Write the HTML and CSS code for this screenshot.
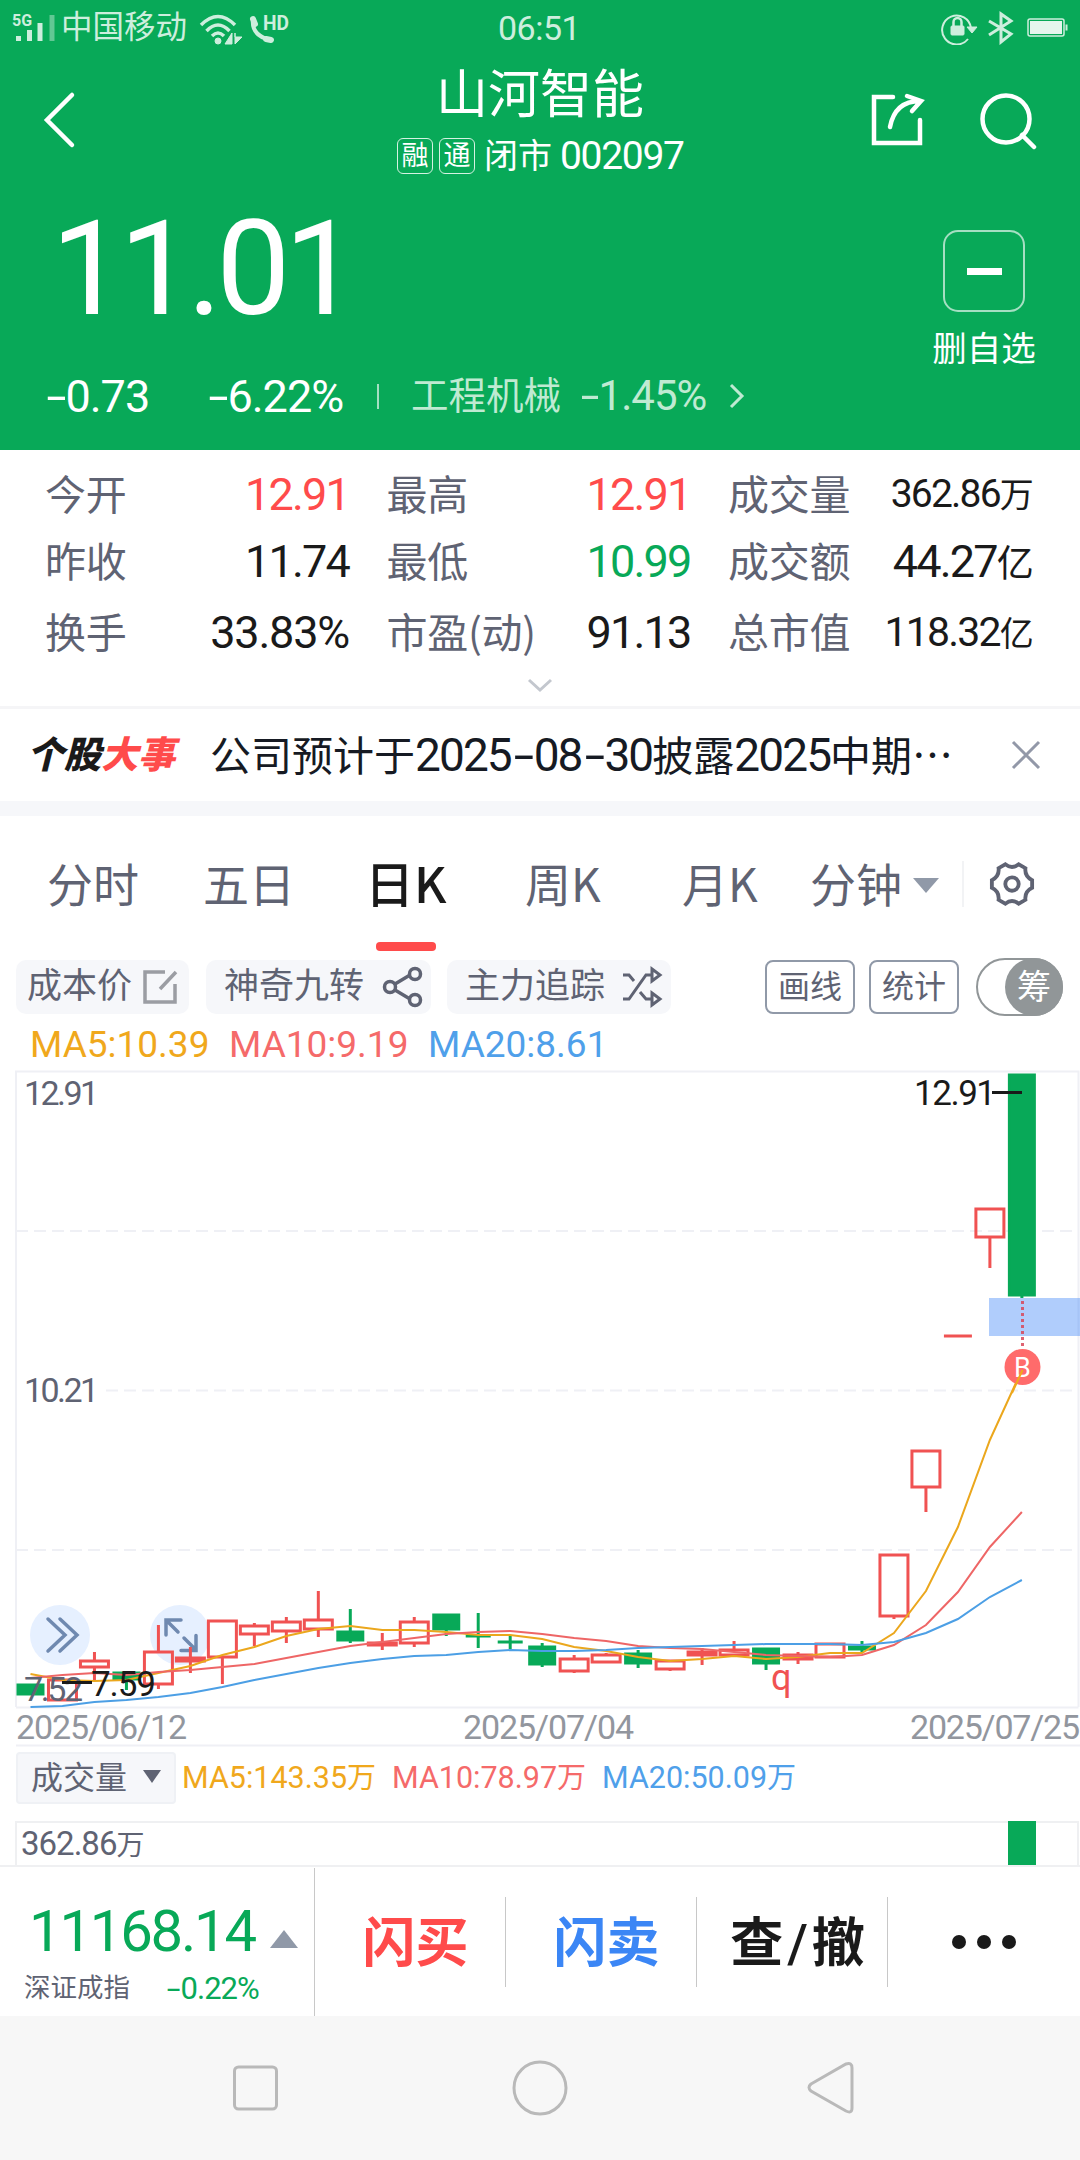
FILE: index.html
```html
<!DOCTYPE html>
<html lang="zh-CN">
<head>
    <meta charset="UTF-8">
    <meta name="viewport" content="width=device-width, initial-scale=1.0">
    <title>山河智能 002097</title>
    <link rel="stylesheet" href="styles.css">
</head>
<body>
    <div class="top">
        <div class="status">
            <svg class="signal" width="46" height="36" viewBox="0 0 46 36">
                <text x="0" y="16" font-size="16" font-weight="700">5G</text>
                <path d="M6.500 26v5M17.500 20v11M28 13v18" stroke-width="5"/>
                <path d="M40 5v26" stroke-width="5" opacity=".45"/>
            </svg>
            <span class="carrier">中国移动</span>
            <svg class="wifi" width="44" height="34" viewBox="0 0 44 34">
                <path d="M2 14q17-17 34 0M7.500 20q11.500-12 23 0M13 25q6-6 12 0" stroke-width="3.500" fill="none"/>
                <circle cx="19" cy="30" r="3"/>
                <path d="M33 22v11h-7zM36 33V22v4h7z" stroke-width="1"/>
            </svg>
            <svg class="call" width="42" height="34" viewBox="0 0 42 34">
                <path d="M4 8q-2 17 18 21" stroke-width="4" fill="none"/>
                <path d="M4 8l2 5M17 28l5 1" stroke-width="6" stroke-linecap="round"/>
                <text x="14" y="19" font-size="21" font-weight="700" textLength="26" lengthAdjust="spacingAndGlyphs">HD</text>
            </svg>
            <span class="clock">06:51</span>
            <svg class="lock" width="38" height="34" viewBox="0 0 38 34">
                <path d="M28 28A14.500 14.500 0 1 1 31 17" stroke-width="2" fill="none"/>
                <path d="M27 16h10l-5 6z" stroke-width="1"/>
                <rect x="11" y="15" width="13" height="9" rx="1" stroke-width="1"/>
                <path d="M13.500 15v-4a4 4 0 0 1 8 0v4" stroke-width="2.500" fill="none"/>
            </svg>
            <svg class="bluetooth" width="26" height="34" viewBox="0 0 26 34">
                <path d="M1 10l22 13-10 8V3l10 7L1 24" stroke-width="3" fill="none"/>
            </svg>
            <svg class="battery" width="41" height="20" viewBox="0 0 41 20">
                <rect x="1" y="1" width="36" height="17" rx="2" fill="none" stroke-width="1.500"/>
                <rect x="3" y="3" width="32" height="13" fill="#e6f6ee" stroke="none"/>
                <rect x="39" y="7" width="1" height="5"/>
            </svg>
        </div>

        <div class="header">
            <svg class="back" width="34" height="60" viewBox="0 0 34 60">
                <path d="M30 5L5 30l25 25"/>
            </svg>
            <div class="name">
                <h1>山河智能</h1>
                <div class="code">
                    <span class="badge">融</span><span class="badge">通</span>
                    <span class="market">闭市</span><span class="num">002097</span>
                </div>
            </div>
            <svg class="share" width="56" height="56" viewBox="0 0 56 56">
                <path d="M23 5H4v46H50V28M20 35Q25 9 50 9M37 4l14 5-9 10"/>
            </svg>
            <svg class="search" width="58" height="58" viewBox="0 0 58 58">
                <circle cx="27" cy="27" r="23.500"/><path d="M43 43l12 12"/>
            </svg>
        </div>

        <div class="quote">
            <div class="price">11.01</div>
            <div class="remove">
                <div class="remove-box"><i></i></div>
                <span>删自选</span>
            </div>
        </div>

        <div class="change">
            <span class="diff"><i class="dash">-</i>0.73</span>
            <span class="rate"><i class="dash">-</i>6.22%</span>
            <i class="bar"></i>
            <span class="sector">工程机械</span>
            <span class="sector-rate"><i class="dash">-</i>1.45%</span>
            <svg width="18" height="28" viewBox="0 0 18 28"><path d="M3 3l11 11L3 25"/></svg>
        </div>
    </div>

    <div class="stats">
        <div class="cell"><label>今开</label><b class="red">12.91</b></div>
        <div class="cell"><label>最高</label><b class="red">12.91</b></div>
        <div class="cell"><label>成交量</label><b class="small">362.86<em>万</em></b></div>
        <div class="cell"><label>昨收</label><b>11.74</b></div>
        <div class="cell"><label>最低</label><b class="green">10.99</b></div>
        <div class="cell"><label>成交额</label><b>44.27<em>亿</em></b></div>
        <div class="cell"><label>换手</label><b class="wide">33.83%</b></div>
        <div class="cell"><label>市盈(动)</label><b>91.13</b></div>
        <div class="cell"><label>总市值</label><b class="small cap">118.32<em>亿</em></b></div>
    </div>
    <div class="more">
        <svg width="28" height="16" viewBox="0 0 28 16"><path d="M3 3l11 10L25 3"/></svg>
    </div>

    <div class="news">
        <div class="news-logo">个股<span>大事</span></div>
        <div class="news-text">公司预计于<span class="n">2025<i class="dash">-</i>08<i class="dash">-</i>30</span>披露<span class="n">2025</span>中期⋯</div>
        <svg width="32" height="32" viewBox="0 0 32 32"><path d="M3 3l26 26M29 3L3 29"/></svg>
    </div>

    <div class="tabs">
        <span class="tab">分时</span>
        <span class="tab">五日</span>
        <span class="tab active">日K</span>
        <span class="tab">周K</span>
        <span class="tab">月K</span>
        <span class="tab minute">分钟<i></i></span>
        <span class="gear">
            <svg width="46" height="46" viewBox="0 0 48 48">
                <path d="M17 3.500Q24 9 31 3.500L38 7.500Q37 16 45 20V28Q37 32 38 40.500L31 44.500Q24 39 17 44.500L10 40.500Q11 32 3 28V20Q11 16 10 7.500Z"/>
                <circle cx="24" cy="24" r="7"/>
            </svg>
        </span>
    </div>

    <div class="tools">
        <span class="chip cost">成本价
            <svg width="36" height="36" viewBox="0 0 36 36"><path d="M23 3H3v30h30V15M18 20L34 3" stroke="#9b9da3"/></svg>
        </span>
        <span class="chip nine">神奇九转
            <svg width="42" height="42" viewBox="0 0 42 42"><path d="M13 18L28 9M13 24l15 9"/><circle cx="8" cy="21" r="5.500"/><circle cx="33" cy="8" r="5.500"/><circle cx="33" cy="34" r="5.500"/></svg>
        </span>
        <span class="chip force">主力追踪
            <svg class="shuffle" width="42" height="42" viewBox="0 0 42 42"><path d="M1 9h6l5 6M1 33h6L24 9h6M18 26l6 7h6M30 3l8 6-8 6zM30 27l8 6-8 6z"/></svg>
        </span>
        <span class="outline draw">画线</span>
        <span class="outline">统计</span>
        <span class="toggle"><i>筹</i></span>
    </div>

    <div class="ma">
        <span class="yellow">MA5:10.39</span>
        <span class="pink">MA10:9.19</span>
        <span class="blue">MA20:8.61</span>
    </div>

    <svg class="chart" width="1080" height="682" viewBox="0 1066 1080 682">
        <g class="grid">
            <path d="M16 1707V1071.500H1078.500V1707M16 1707.500H1078.500" stroke-width="2"/>
            <path d="M16 1231H1078M106 1390.500H1078M16 1550H1078" stroke-width="2" stroke-dasharray="12 6"/>
            <path d="M16 1745.500H1080"/>
        </g>
        <g class="btn">
            <circle cx="60" cy="1635" r="30"/>
            <circle cx="180" cy="1635" r="30"/>
            <path d="M48 1619l17 16-17 16M60 1619l17 16-17 16"/>
            <path d="M166 1635v-15h15M166 1620l12 12M184 1638l12 12M181 1650.500h15v-15"/>
        </g>
        <g id="candles"></g>
        <path class="line-yellow" id="ma5"/>
        <path class="line-red" id="ma10"/>
        <path class="line-blue" id="ma20"/>

        <rect x="989" y="1298" width="91" height="38" fill="#2f7cf6" fill-opacity=".38"/>
        <path d="M1022.500 1301V1349" stroke="#d9485a" stroke-width="3" stroke-dasharray="3 3" opacity=".85"/>
        <circle cx="1022.500" cy="1367" r="18" fill="#ff6b6b"/>
        <text x="1022.500" y="1377" fill="#fff" font-size="27" text-anchor="middle">B</text>
        <path d="M1012 1393L1022.500 1370" stroke="#f0a81c" stroke-width="2"/>

        <g class="label">
            <text x="24" y="1105" textLength="75">12.91</text>
            <text x="24" y="1402" textLength="75">10.21</text>
            <text x="24" y="1701" textLength="59">7.52</text>
        </g>
        <g class="mark">
            <text x="914" y="1105" textLength="82">12.91</text>
            <path d="M992 1092.500H1022M62 1682.500H92"/>
            <text x="91" y="1696" textLength="65">7.59</text>
        </g>
        <text class="q" x="771" y="1690">q</text>
        <g class="date">
            <text x="16" y="1739" textLength="171">2025/06/12</text>
            <text x="463" y="1739" textLength="171">2025/07/04</text>
            <text x="910" y="1739" textLength="170">2025/07/25</text>
        </g>
    </svg>

    <div class="vol-head">
        <span class="select">成交量<i></i></span>
        <span class="yellow">MA5:143.35<em>万</em></span>
        <span class="pink">MA10:78.97<em>万</em></span>
        <span class="blue">MA20:50.09<em>万</em></span>
    </div>
    <div class="volume">
        <span>362.86<em>万</em></span>
        <i></i>
    </div>

    <div class="trade">
        <div class="index">
            <div class="index-value"><span>11168.14</span><i></i></div>
            <div class="index-sub"><span>深证成指</span><b><i class="dash">-</i>0.22%</b></div>
        </div>
        <div class="action buy">闪买</div>
        <div class="action sell">闪卖</div>
        <div class="action">查<span>/</span>撤</div>
        <div class="action dots"><i></i><i></i><i></i></div>
    </div>

    <div class="nav">
        <svg width="1080" height="144" viewBox="0 0 1080 144">
            <rect x="234.500" y="51" width="42" height="42" rx="4"/>
            <circle cx="540" cy="72" r="26"/>
            <path d="M811 68L846 48Q852 46 852 52V92Q852 98 846 95L811 75Q807 71.500 811 68Z"/>
        </svg>
    </div>

    <script src="chart.js"></script>
</body>
</html>
```

FILE: styles.css
```css
* {
    box-sizing: border-box;
}

body {
    margin: 0;
    width: 1080px;
    background: #fff;
    color: #1a1a1a;
    font-family: Roboto, "Noto Sans CJK SC", sans-serif;
    line-height: 1;
    white-space: nowrap;
}

i, em {
    font-style: normal;
}

svg {
    display: block;
    flex: none;
}

.dash {
    display: inline-block;
    margin: 0 4px;
    transform: scaleX(1.600);
}

.red { color: #ff4b4b; }
.green { color: #08a958; }
.yellow { color: #f0a81c; }
.pink { color: #f56a6a; }
.blue { color: #4fa0ea; }

/* 顶部 */
.top {
    height: 450px;
    background: #08a958;
    color: #fff;
}

.status {
    display: flex;
    align-items: center;
    height: 56px;
    padding: 0 12px;
    color: #cdeedd;
}

.status svg {
    fill: #cdeedd;
    stroke: #cdeedd;
}

.status text {
    stroke: none;
}

.carrier {
    font-size: 31.500px;
    margin-left: 3px;
}

.wifi { margin-left: 12px; }
.call { margin-left: 6px; }

.clock {
    font-size: 34px;
    letter-spacing: -0.5px;
    margin-left: 207px;
}

.lock { margin-left: auto; }
.bluetooth { margin-left: 10px; }
.battery { margin-left: 13px; }

.header {
    display: flex;
    height: 144px;
    padding: 0 43px 0 42px;
}

.header svg {
    fill: none;
    stroke: #fff;
    stroke-width: 4.500;
    stroke-linecap: round;
}

.back {
    margin-top: 34px;
}

.name {
    width: 320px;
    margin-left: 308px;
    text-align: center;
}

.name h1 {
    margin: 14px 0 0 -7px;
    font-size: 52px;
    font-weight: 400;
    line-height: 52px;
}

.code {
    display: flex;
    align-items: center;
    height: 40px;
    margin-top: 14px;
    margin-left: 13px;
}

.badge {
    width: 36px;
    height: 36px;
    margin-right: 6px;
    border: 1.500px solid #d5f2e2;
    border-radius: 6px;
    font-size: 27px;
    line-height: 35px;
}

.market {
    font-size: 34px;
    margin: 0 8px 0 3px;
}

.num {
    font-size: 39px;
    letter-spacing: -1.300px;
}

.share { margin: 36px 0 0 167px; }
.search { margin: 36px 0 0 53px; }

.quote {
    display: flex;
    justify-content: space-between;
    height: 170px;
    padding: 0 42px 0 51px;
}

.price {
    padding-top: 3px;
    font-size: 132px;
    line-height: 132px;
    letter-spacing: -6px;
}

.remove {
    width: 108px;
    padding-top: 30px;
    text-align: center;
    font-size: 34.500px;
}

.remove-box {
    display: flex;
    align-items: center;
    justify-content: center;
    width: 82px;
    height: 82px;
    margin: 0 auto 20px;
    border: 2px solid #a5dfc2;
    border-radius: 15px;
}

.remove-box i {
    width: 35px;
    height: 7px;
    background: #fff;
}

.change {
    display: flex;
    align-items: center;
    height: 52px;
    padding-left: 46px;
    font-size: 45px;
    letter-spacing: -1px;
}

.diff { width: 162px; }
.rate { width: 169px; }

.bar {
    width: 2px;
    height: 25px;
    background: #a5dfc2;
}

.sector {
    margin: 2px 19px 0 32px;
    font-size: 37.500px;
    letter-spacing: 0;
    color: #bfead2;
}

.sector-rate {
    width: 148px;
    font-size: 42px;
    color: #bfead2;
}

.change svg {
    fill: none;
    stroke: #bfead2;
    stroke-width: 3;
}

/* 行情数据 */
.stats {
    display: grid;
    grid-template-columns: 304px 304px 304px;
    grid-template-rows: 66px 68px 74px;
    column-gap: 37.500px;
    height: 220px;
    padding: 11px 46px 0 45px;
}

.cell {
    display: flex;
    align-items: center;
    justify-content: space-between;
}

.cell label {
    margin-top: -3px;
    font-size: 41px;
    letter-spacing: -0.300px;
    color: #5f6373;
    font-family: "Noto Sans CJK SC", sans-serif;
}

.cell b {
    font-size: 45px;
    font-weight: 400;
    letter-spacing: -1.800px;
}

.cell b.wide {
    letter-spacing: -1.200px;
}

.cell em {
    font-size: 37px;
}

.cell b.small {
    font-size: 39px;
}

.cell b.cap {
    font-size: 41px;
}

.cell .small em {
    font-size: 34px;
}

.more {
    display: flex;
    justify-content: center;
    height: 39px;
    padding-top: 7px;
    border-bottom: 3px solid #f5f5f7;
}

.more svg {
    fill: none;
    stroke: #c3c7ce;
    stroke-width: 3;
}

/* 个股大事 */
.news {
    display: flex;
    align-items: center;
    height: 107px;
    padding: 0 38px 0 27px;
    border-bottom: 15px solid #f6f7fa;
}

.news-logo {
    width: 183px;
    font-size: 37px;
    font-weight: 900;
    font-style: italic;
}

.news-logo span {
    color: #ff4b4b;
}

.news-text {
    width: 800px;
    font-size: 41px;
    font-family: "Noto Sans CJK SC", sans-serif;
    color: #161a23;
}

.news-text .n {
    font-family: Roboto, sans-serif;
    font-size: 46px;
    letter-spacing: -1.900px;
}

.news-text .dash {
    margin: 0 6px;
}

.news svg {
    fill: none;
    stroke: #9298a8;
    stroke-width: 3;
}

/* 周期切换 */
.tabs {
    display: flex;
    height: 135px;
    padding-left: 47px;
    font-size: 46px;
    line-height: 132px;
    color: #5f6373;
    font-family: "Noto Sans CJK SC", sans-serif;
}

.tab { width: 156px; }
.tab:nth-child(2) { width: 162px; }
.tab:nth-child(3) { width: 160px; }
.tab:nth-child(4) { width: 157px; }
.tab:nth-child(5) { width: 128px; }

.tab.active {
    position: relative;
    color: #1a1a1a;
    font-weight: 500;
    font-size: 49px;
}

.tab.active::after {
    content: "";
    position: absolute;
    left: 11px;
    bottom: 0;
    width: 60px;
    height: 9px;
    border-radius: 4px;
    background: #ff4b4b;
}

.tab.minute {
    display: flex;
    align-items: center;
    height: 132px;
    width: 152px;
}

.minute i {
    margin: 7px 0 0 11px;
    border: 13px solid transparent;
    border-top: 15px solid #9099a8;
    border-bottom: 0;
}

.gear {
    height: 46px;
    margin-top: 45px;
    padding-left: 25px;
    border-left: 2px solid #f2f3f5;
}

.gear svg {
    fill: none;
    stroke: #5f6373;
    stroke-width: 4;
}

/* 工具条 */
.tools {
    display: flex;
    align-items: center;
    height: 72px;
    padding-left: 16px;
    color: #5f6373;
}

.chip {
    display: flex;
    align-items: center;
    justify-content: space-between;
    height: 54px;
    margin-right: 16px;
    border-radius: 10px;
    background: #f6f7fa;
    font-size: 35px;
    line-height: 54px;
}

.chip svg {
    fill: none;
    stroke: #5f6373;
    stroke-width: 3.500;
}

.chip .shuffle {
    stroke-width: 3;
}

.cost { width: 173px; padding: 0 11px; margin-right: 17px; }
.nine { width: 225px; padding: 0 7px 0 18px; }
.force { width: 224px; padding: 0 7px 0 18px; }

.outline {
    width: 90px;
    height: 54px;
    margin-right: 14px;
    border: 2px solid #9099a8;
    border-radius: 8px;
    font-size: 32px;
    line-height: 51px;
    text-align: center;
}

.outline.draw {
    margin-left: 78px;
}

.toggle {
    display: flex;
    justify-content: flex-end;
    width: 87px;
    height: 58px;
    margin-left: 3px;
    border: 2px solid #919698;
    border-radius: 29px;
}

.toggle i {
    width: 58px;
    height: 58px;
    margin: -2px -2px 0 0;
    border-radius: 50%;
    background: #919698;
    color: #fff;
    font-size: 34px;
    line-height: 58px;
    text-align: center;
}

.ma {
    display: flex;
    align-items: center;
    height: 43px;
    padding-left: 30px;
    font-size: 37px;
}

.ma span { width: 199px; }

/* K线图 */
.chart text {
    font-family: Roboto, sans-serif;
}

.grid {
    fill: none;
    stroke: #eff0f5;
    stroke-width: 2;
}

.btn circle { fill: #e6f0ff; }

.btn path {
    fill: none;
    stroke: #6f89b0;
    stroke-width: 3.500;
    stroke-linecap: round;
}

.up { fill: #fff; fill-opacity: 0; stroke: #f05252; stroke-width: 3; }
.up.solid { fill: #ff4b4b; fill-opacity: 1; }
.down { fill: #08a958; stroke: #08a958; stroke-width: 3; }

.line-yellow, .line-red, .line-blue {
    fill: none;
    stroke-width: 2;
}

.line-yellow { stroke: #eba71d; }
.line-red { stroke: #ee6666; }
.line-blue { stroke: #4c9fe5; }

.label { font-size: 34px; fill: #5f6373; }
.mark { font-size: 35px; fill: #1a1a1a; }
.mark path { stroke: #1a1a1a; stroke-width: 3; }
.q { font-size: 36px; fill: #f05252; }
.date { font-size: 34px; fill: #92969e; }

/* 成交量 */
.vol-head {
    display: flex;
    align-items: center;
    height: 73px;
    padding: 0 0 13px 16px;
    font-size: 30.500px;
}

.vol-head > span { width: 210px; }
.vol-head em { font-size: 29px; }

.vol-head .select {
    display: flex;
    align-items: center;
    width: 160px;
    height: 52px;
    margin-right: 6px;
    padding-left: 13px;
    border: 2px solid #eff1f5;
    border-radius: 4px;
    background: #f6f7fa;
    color: #5f6373;
    font-size: 32px;
    line-height: 50px;
}

.select i {
    margin: -4px 0 0 16px;
    border: 9px solid transparent;
    border-top: 13px solid #5f6373;
    border-bottom: 0;
}

.volume {
    display: flex;
    justify-content: space-between;
    height: 44px;
    margin: 0 1px 0 15px;
    padding: 0 41px 0 4px;
    border: 2px solid #eff0f2;
    border-bottom: 0;
    color: #5f6373;
    font-size: 33px;
    line-height: 42px;
}

.volume span { letter-spacing: -1px; }
.volume em { font-size: 28px; }

.volume i {
    width: 28px;
    height: 44px;
    margin-top: -2px;
    background: #08a958;
}

/* 底部交易栏 */
.trade {
    display: flex;
    align-items: center;
    height: 151px;
    border-top: 2px solid #eff0f2;
}

.index {
    width: 315px;
    height: 148px;
    padding: 34px 0 0 29px;
    border-right: 1px solid #c8c8c8;
}

.index-value {
    display: flex;
    align-items: center;
    color: #08a958;
    font-size: 58px;
}

.index-value span {
    width: 241px;
    letter-spacing: -2.200px;
}

.index-value i {
    margin-top: 17px;
    border: 14px solid transparent;
    border-bottom: 18px solid #9099a8;
    border-top: 0;
}

.index-sub {
    display: flex;
    align-items: center;
    margin: 13px 0 0 -5px;
    font-size: 26.500px;
    color: #5f6373;
}

.index-sub b {
    margin-left: 35px;
    color: #08a958;
    font-size: 31px;
    font-weight: 400;
    letter-spacing: -1px;
}

.action {
    width: 191px;
    height: 90px;
    padding-left: 11px;
    border-right: 1px solid #c8c8c8;
    font-size: 53px;
    font-weight: 700;
    line-height: 95px;
    text-align: center;
}

.action span {
    padding: 0 4px;
    font-weight: 500;
}

.buy { color: #ff4b4b; }
.sell { color: #3b86f5; }

.dots {
    display: flex;
    align-items: center;
    justify-content: center;
    gap: 11px;
    padding-left: 0;
    border: 0;
}

.dots i {
    width: 14px;
    height: 14px;
    border-radius: 50%;
    background: #1a1a1a;
}

.nav {
    height: 144px;
    background: #f7f7f7;
}

.nav svg {
    fill: none;
    stroke: #b9b9b9;
    stroke-width: 3;
}
```

FILE: chart.js
```js
// [类型, 实体上沿, 实体下沿, 影线上沿, 影线下沿]
const candles = [
    ['down', 1685, 1694], ['up', 1680, 1700], ['up', 1661, 1667, 1652, 1680],
    ['down', 1673, 1679, 1673, 1690], ['up', 1652, 1684, 1625, 1689],
    ['solid', 1658, 1661, 1647, 1673], ['up', 1621, 1657, 1621, 1684],
    ['up', 1626, 1634, 1623, 1646], ['up', 1622, 1631, 1617, 1643],
    ['up', 1620, 1629, 1591, 1637], ['down', 1632, 1640, 1609, 1643],
    ['solid', 1643, 1645, 1633, 1650], ['up', 1622, 1643, 1617, 1647],
    ['down', 1615, 1629, 1615, 1636], ['down', 1636, 1636, 1613, 1648],
    ['down', 1642, 1642, 1635, 1649], ['down', 1647, 1664, 1643, 1667],
    ['up', 1659, 1671, 1655, 1673], ['up', 1655, 1662, 1653, 1662],
    ['down', 1654, 1663, 1650, 1668], ['up', 1661, 1669, 1660, 1671],
    ['solid', 1652, 1655, 1648, 1665], ['up', 1650, 1655, 1641, 1655],
    ['down', 1649, 1663, 1649, 1670], ['solid', 1655, 1659, 1652, 1664],
    ['up', 1644, 1657], ['down', 1647, 1649, 1641, 1652],
    ['up', 1555, 1616, 1555, 1619], ['up', 1451, 1487, 1451, 1512],
    ['up', 1336, 1336], ['up', 1209, 1237, 1209, 1268], ['down', 1075, 1295, 1075, 1298]
];

const ma = {
    ma5: [1674, 1680, 1681, 1680, 1673, 1666, 1655, 1647, 1636, 1629, 1626, 1630, 1630, 1632, 1635, 1635, 1639, 1647, 1651, 1657, 1661, 1659, 1656, 1659, 1657, 1653, 1653, 1633, 1591, 1527, 1440, 1370],
    ma10: [1678, 1675, 1673, 1675, 1672, 1670, 1667, 1664, 1658, 1652, 1646, 1642, 1638, 1634, 1632, 1631, 1634, 1638, 1641, 1646, 1648, 1649, 1652, 1655, 1656, 1657, 1655, 1645, 1625, 1592, 1547, 1512],
    ma20: [1707, 1706, 1702, 1700, 1697, 1693, 1687, 1680, 1674, 1668, 1663, 1659, 1656, 1655, 1652, 1650, 1651, 1651, 1650, 1648, 1647, 1646, 1645, 1644, 1644, 1644, 1645, 1642, 1633, 1619, 1597, 1580]
};

const x = i => 30.5 + i * 31.98;

document.getElementById('candles').innerHTML = candles.map(([type, top, bottom, high, low], i) => {
    const c = x(i);
    const cls = type === 'solid' ? 'up solid' : type;
    const w = type === 'down' ? 12.5 : 14;
    let d = `M${c - w} ${top}H${c + w}V${bottom}H${c - w}Z`;
    if (high) {
        d += `M${c} ${high}V${top}M${c} ${bottom}V${low}`;
    }
    return `<path class="${cls}" d="${d}"/>`;
}).join('');

for (const id in ma) {
    document.getElementById(id).setAttribute('d', 'M' + ma[id].map((y, i) => `${x(i)} ${y}`).join('L'));
}
```
